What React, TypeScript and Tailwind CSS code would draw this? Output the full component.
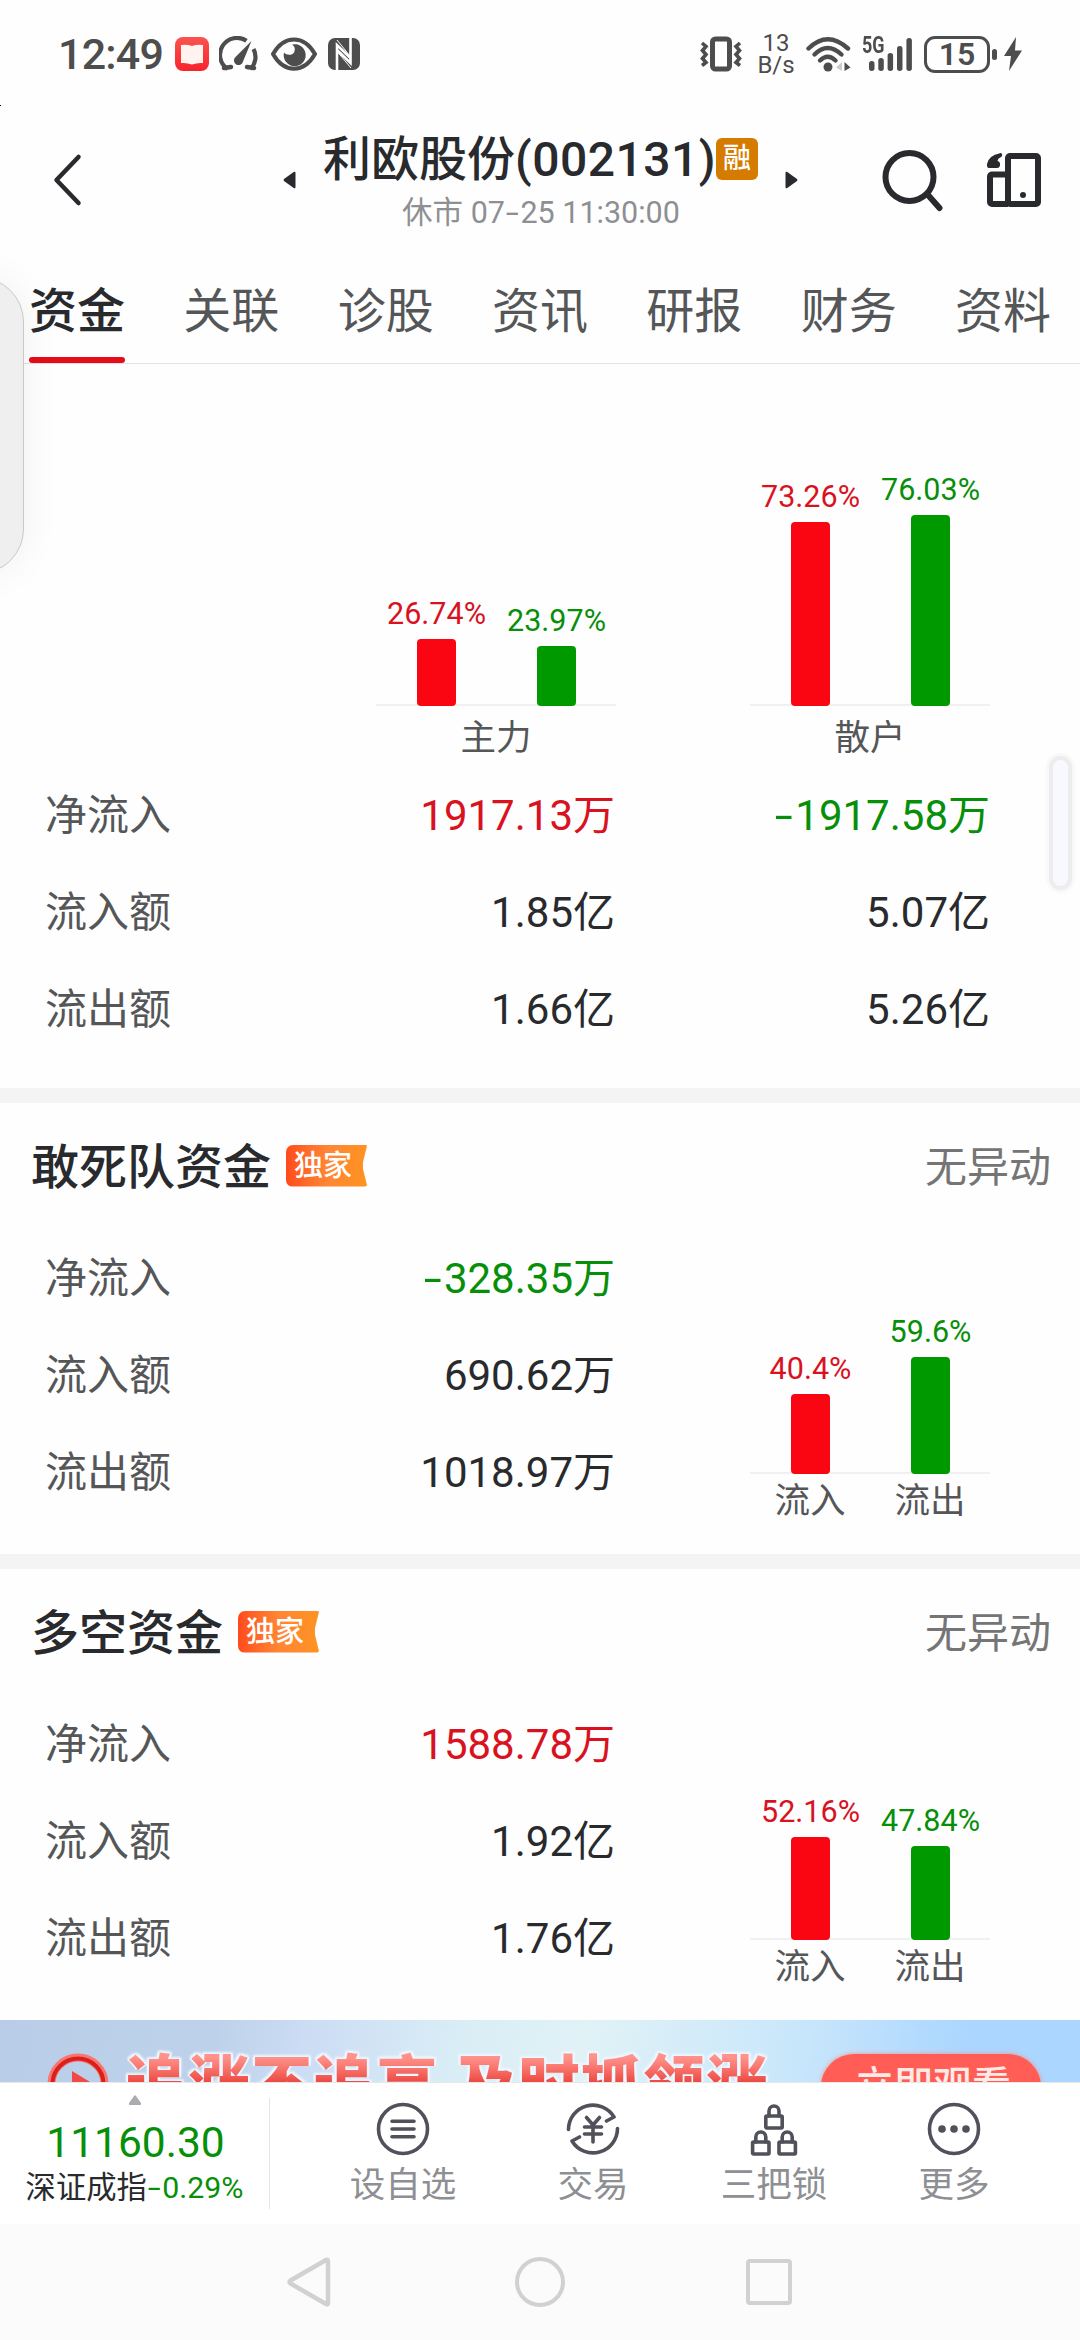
import React from "react";

type Tone = "red" | "green" | "dark";
type Bar = { value: number; tone: "red" | "green"; label?: string };

const toneText: Record<Tone, string> = {
  red: "text-[#d9121f]",
  green: "text-[#078f0a]",
  dark: "text-[#292a2d]",
};
const toneBar = { red: "bg-[#f90612]", green: "bg-[#009900]" };

/* Number text; a leading minus is drawn wider than the font's hyphen. */
function Num({ children }: { children: string }) {
  if (!children.startsWith("-")) return <>{children}</>;
  return (
    <>
      <span className="mr-[0.13em] ml-[0.1em] inline-block scale-x-[1.55]">-</span>
      {children.slice(1)}
    </>
  );
}

function StatusBar() {
  return (
    <div className="flex h-[108px] shrink-0 items-center pl-[58px] text-[#4d4d4d]">
      <span className="w-[117px] text-[43px] leading-[50px] font-medium tracking-[-0.800px]">12:49</span>
      <svg className="h-[34px] w-[34px]" viewBox="0 0 34 34">
        <defs>
          <linearGradient id="book" x1="0" y1="0" x2="0" y2="1">
            <stop offset="0" stopColor="#f9544f" />
            <stop offset="1" stopColor="#f8232c" />
          </linearGradient>
        </defs>
        <rect width="34" height="34" rx="8" fill="url(#book)" />
        <path d="M6 8q6-1 11 1q5-2 11-1v18q-6-.5-11 1.500q-5-2-11-1.500z" fill="#fff3f0" />
      </svg>
      <svg className="ml-[10px] h-[36px] w-[40px]" viewBox="0 0 40 36" fill="none" stroke="currentColor" strokeWidth="4.200" strokeLinecap="butt">
        <path d="M8.500 33A17 17 0 0 1 27.500 4.800" />
        <path d="M34.500 13A17 17 0 0 1 31.500 33" />
        <path d="M5 32l7-1M35 32l-7-1" strokeWidth="4.500" strokeLinecap="round" />
        <path d="M32.500 5L24 25.500a4.600 4.600 0 1 1-7.500-4.500z" fill="currentColor" stroke="none" />
      </svg>
      <svg className="ml-[12px] h-[34px] w-[46px]" viewBox="0 0 46 34">
        <path d="M2 17C13-2.500 33-2.500 44 17C33 36.500 13 36.500 2 17z" fill="none" stroke="currentColor" strokeWidth="4" />
        <path d="M21 7.500a11 11 0 1 1-8 8c2 2.500 8 3.500 10 0c1.800-3.500.5-6.500-2-8z" fill="currentColor" />
      </svg>
      <svg className="ml-[11px] h-[32px] w-[32px]" viewBox="0 0 32 32">
        <rect width="32" height="32" rx="7" fill="currentColor" />
        <path d="M9 32V7l13.500 13M22.500 0v25L9 12" fill="none" stroke="#fff" strokeWidth="2.600" />
        <path d="M9 2L22 18M10 14.500L23 30" fill="none" stroke="#fff" strokeWidth="1" />
      </svg>

      <svg className="ml-[340px] h-[36px] w-[42px]" viewBox="0 0 42 36" fill="none" stroke="currentColor" strokeWidth="4">
        <rect x="12.500" y="3" width="17" height="30" rx="3" strokeWidth="5" />
        <path d="M2 7l4 3.500l-3.500 4l3.500 4l-3.500 4l3.500 4l-4 3M40 7l-4 3.500l3.500 4l-3.500 4l3.500 4l-3.500 4l4 3" strokeWidth="3.600" />
      </svg>
      <div className="ml-[15px] flex w-[38px] flex-col items-center text-[24px] leading-[22px]">
        <span>13</span>
        <span>B/s</span>
      </div>
      <svg className="ml-[11px] h-[36px] w-[46px]" viewBox="0 0 46 36" fill="none" stroke="currentColor" strokeWidth="4.400" strokeLinecap="round">
        <path d="M2.500 12.500Q21.500-6 42 12.500" />
        <path d="M8.500 18.500Q21.500 5.500 35.500 18.500" />
        <path d="M14 24.500Q21.500 17 29.500 24.500" />
        <circle cx="22" cy="31" r="4.500" fill="currentColor" stroke="none" />
        <path d="M36 26v9l-6-3.500z" fill="#ccc" stroke="none" />
        <path d="M38.500 26v9l6-3.500z" fill="currentColor" stroke="none" />
      </svg>
      <div className="ml-[10px] flex h-[36px] w-[50px] items-end">
        <span className="w-[7px] origin-left scale-x-[0.78] self-start text-[23px] leading-[20px] font-bold">5G</span>
        <svg className="h-[36px] w-[43px] shrink-0" viewBox="0 0 43 36" fill="currentColor">
          <rect x="0" y="25" width="5.500" height="10" rx="2.700" />
          <rect x="9.300" y="22" width="5.500" height="13" rx="2.700" />
          <rect x="18.600" y="17" width="5.500" height="18" rx="2.700" />
          <rect x="28" y="10" width="5.500" height="25" rx="2.700" />
          <rect x="37.400" y="2" width="5.500" height="33" rx="2.700" />
        </svg>
      </div>
      <div className="ml-[12px] flex h-[37px] w-[66px] items-center justify-center rounded-[11px] border-[3px] border-current text-[32px] leading-[32px] font-semibold">
        15
      </div>
      <div className="ml-[2px] h-[11px] w-[5px] rounded-full bg-current" />
      <svg className="ml-[6px] h-[36px] w-[20px]" viewBox="0 0 20 36">
        <path d="M13 1L1 20h7L6 35L19 14.500h-7z" fill="currentColor" />
      </svg>
    </div>
  );
}

function Header() {
  return (
    <div className="flex h-[144px] shrink-0 items-center text-[#292a2d]">
      <svg className="ml-[52px] h-[54px] w-[32px]" viewBox="0 0 32 54" fill="none" stroke="currentColor" strokeWidth="4.500" strokeLinecap="round" strokeLinejoin="round">
        <path d="M26.500 4L4.500 27L26.500 50" />
      </svg>
      <svg className="ml-[199px] h-[18px] w-[13px]" viewBox="0 0 13 18" fill="currentColor">
        <path d="M12.500 2v14q0 2-1.800 1L1 10q-1-1 0-2L10.700 1q1.800-1 1.800 1z" />
      </svg>
      <div className="ml-[27px] flex h-[144px] w-[436px] flex-col pt-[22px]">
        <div className="flex h-[60px] items-center">
          <span className="w-[393px] text-[48px] leading-[60px] font-medium whitespace-nowrap">
            利欧股份<span className="tracking-[0.500px]">(002131)</span>
          </span>
          <span className="mt-[-2px] flex h-[42px] w-[42px] items-center justify-center rounded-[6px] bg-[#d47b00] text-[28px] leading-[42px] font-medium text-white">
            融
          </span>
        </div>
        <div className="mt-[3px] text-center text-[30.500px] leading-[40px] text-[#8e8f93]">
          休市 07<Num>-25</Num> 11:30:00
        </div>
      </div>
      <svg className="ml-[26px] h-[18px] w-[13px]" viewBox="0 0 13 18" fill="currentColor">
        <path d="M.5 2v14q0 2 1.800 1L12 10q1-1 0-2L2.300 1Q.5 0 .5 2z" />
      </svg>
      <svg className="ml-[83px] h-[64px] w-[64px]" viewBox="0 0 64 64" fill="none" stroke="currentColor" strokeWidth="6" strokeLinecap="round">
        <circle cx="28.500" cy="29" r="24" />
        <path d="M47 47L58.500 60" />
      </svg>
      <svg className="ml-[41px] h-[56px] w-[56px]" viewBox="0 0 56 56" fill="none" stroke="currentColor" strokeWidth="6" strokeLinejoin="round">
        <rect x="22" y="4" width="30" height="48" rx="2" />
        <path d="M22 22.500H6a2 2 0 0 0-2 2V50a2 2 0 0 0 2 2h16" />
        <circle cx="37" cy="43" r="3" fill="currentColor" stroke="none" />
        <path d="M14 1.200q2-.6 2.200 1.500q.2 2.300-2 2.800q-2.300.6-2.700 3.500q3 .5 2.500 4.500q-.5 2.500-3 2.500H3Q.6 16 1 12Q2.500 3.500 14 1.200z" fill="currentColor" stroke="none" />
      </svg>
    </div>
  );
}

function Tabs() {
  const tabs = ["资金", "关联", "诊股", "资讯", "研报", "财务", "资料"];
  return (
    <div className="flex h-[112px] shrink-0 justify-between border-b border-[#e4e4e4] px-[29px] text-[48px] text-[#555658]">
      {tabs.map((t, i) => (
        <div key={t} className="flex h-[111px] w-[96px] flex-col justify-between">
          <span className={i === 0 ? "pt-[25px] leading-[70px] font-medium text-[#292a2d]" : "pt-[25px] leading-[70px]"}>{t}</span>
          {i === 0 && <span className="h-[6px] rounded-full bg-[#e60c18]" />}
        </div>
      ))}
    </div>
  );
}

function BarChart({ bars, scale }: { bars: Bar[]; scale: number }) {
  return (
    <div className="flex w-[240px] items-end border-b-2 border-[#f0f0f0]">
      {bars.map((b) => (
        <div key={b.tone} className="-mb-[2px] flex w-[120px] flex-col items-center">
          <span className={`mb-[7px] pl-[1px] text-[30.500px] leading-[36px] ${toneText[b.tone]}`}>{b.value}%</span>
          <div className={`w-[39px] rounded-[4px] ${toneBar[b.tone]}`} style={{ height: b.value * scale }} />
        </div>
      ))}
    </div>
  );
}

function Row({ label, values }: { label: string; values: [string, Tone][] }) {
  return (
    <div className="flex h-[97px] items-center text-[42px] leading-[60px]">
      <span className="w-[195px] text-[#555658]">{label}</span>
      {values.map(([v, tone], i) => (
        <span key={i} className={`w-[375px] text-right ${toneText[tone]}`}>
          <Num>{v}</Num>
        </span>
      ))}
    </div>
  );
}

function Overview() {
  return (
    <section className="flex h-[724px] shrink-0 flex-col">
      <div className="flex h-[342px] items-end gap-[134px] pl-[376px]">
        <BarChart scale={2.52} bars={[{ value: 26.74, tone: "red" }, { value: 23.97, tone: "green" }]} />
        <BarChart scale={2.51} bars={[{ value: 73.26, tone: "red" }, { value: 76.03, tone: "green" }]} />
      </div>
      <div className="flex h-[61px] gap-[134px] pl-[376px] text-center text-[35.500px] leading-[64px] text-[#555658]">
        <span className="w-[240px]">主力</span>
        <span className="w-[240px]">散户</span>
      </div>
      <div className="pl-[45px]">
        <Row label="净流入" values={[["1917.13万", "red"], ["-1917.58万", "green"]]} />
        <Row label="流入额" values={[["1.85亿", "dark"], ["5.07亿", "dark"]]} />
        <Row label="流出额" values={[["1.66亿", "dark"], ["5.26亿", "dark"]]} />
      </div>
    </section>
  );
}

function ExclusiveBadge() {
  return (
    <div className="mt-[-2px] ml-[15px] h-[42px] w-[81px] rounded-l-[7px] bg-linear-to-r from-[#ff4a1c] via-[#ff8534] to-[#ff9320] pl-[8px] text-[29px] leading-[43px] font-medium text-white [clip-path:polygon(0_0,98%_0,100%_3%,95%_42%,95%_58%,100%_97%,98%_100%,0_100%)]">
      独家
    </div>
  );
}

function FundSection({ title, rows, bars }: { title: string; rows: [string, string, Tone][]; bars: Bar[] }) {
  return (
    <section className="flex h-[466px] shrink-0 flex-col border-t-[15px] border-[#f4f4f4]">
      <div className="flex h-[127px] items-center pr-[29px] pl-[31px]">
        <h2 className="pt-[2px] text-[48px] leading-[60px] font-medium text-[#292a2d]">{title}</h2>
        <ExclusiveBadge />
        <span className="ml-auto pt-[2px] text-[42px] leading-[60px] text-[#757575]">无异动</span>
      </div>
      <div className="flex">
        <div className="w-[615px] pl-[45px]">
          {rows.map(([label, value, tone]) => (
            <Row key={label} label={label} values={[[value, tone]]} />
          ))}
        </div>
        <div className="ml-[135px] flex w-[240px] flex-col">
          <div className="flex h-[244px] items-end">
            <BarChart scale={1.97} bars={bars} />
          </div>
          <div className="grid grid-cols-2 text-center text-[35.500px] leading-[54px] text-[#555658]">
            <span>流入</span>
            <span>流出</span>
          </div>
        </div>
      </div>
    </section>
  );
}

function Banner() {
  return (
    <div className="flex h-[62px] shrink-0 items-start overflow-hidden bg-[linear-gradient(100deg,#b9cde8_0%,#bdd2ea_20%,#cbdcf4_28%,#d9edf6_42%,#e0f2f6_54%,#c8e6fb_74%,#abd6ff_89%)] pl-[47px]">
      <svg className="mt-[33px] h-[62px] w-[62px] shrink-0" viewBox="0 0 62 62">
        <circle cx="31" cy="31" r="26.500" fill="none" stroke="#f7766f" strokeWidth="8" />
        <circle cx="31" cy="31" r="25.500" fill="none" stroke="#d9201d" strokeWidth="4" />
        <path d="M25 18l18 11l-18 11z" fill="#ef4a44" />
      </svg>
      <div className="mt-[25px] ml-[17px] w-[695px] shrink-0 [filter:drop-shadow(2px_0_0_#f0f6ff)_drop-shadow(-2px_0_0_#f0f6ff)_drop-shadow(0_-2px_1px_#f0f6ff)]">
        <span className="block bg-linear-to-b from-[#ff938c] from-15% to-[#e52a2a] to-55% bg-clip-text text-[61px] leading-[80px] font-black tracking-[1.600px] whitespace-nowrap text-transparent">
          追涨不追高 及时抓领涨
        </span>
      </div>
      <div className="mt-[34px] h-[66px] w-[220px] shrink-0 rounded-full bg-[#ff5d55] pl-[4px] text-center text-[39px] leading-[64px] font-medium text-[#ffeae5] shadow-[0_0_4px_#ff8a80]">
        立即观看
      </div>
    </div>
  );
}

function Lock({ x, y }: { x: number; y: number }) {
  return (
    <g transform={`translate(${x} ${y})`}>
      <rect x="1.800" y="12" width="16.400" height="12" rx="1" />
      <path d="M5 12V7a5 5 0 0 1 10 0v5" />
    </g>
  );
}

const iconProps = {
  className: "h-[54px] w-[54px]",
  viewBox: "0 0 54 54",
  fill: "none",
  stroke: "#50515a",
  strokeWidth: 3.6,
  strokeLinecap: "round" as const,
  strokeLinejoin: "round" as const,
};

function BottomBar() {
  return (
    <div className="flex h-[142px] shrink-0 border-t border-[#e8e8e8] bg-white">
      <div className="flex w-[269px] flex-col items-center">
        <svg className="mt-[12px] h-[10px] w-[12px]" viewBox="0 0 12 10" fill="#aaacaf">
          <path d="M5 1q1-1.500 2 0l5 7q.5 2-1 2H1q-1.500 0-1-2z" />
        </svg>
        <span className="mt-[13px] pl-[2px] text-[42.500px] leading-[50px] text-[#078f0a]">11160.30</span>
        <span className="mt-[2px] text-[30.300px] leading-[36px] whitespace-nowrap text-[#292a2d]">
          深证成指<span className="text-[#078f0a]"><Num>-0.29%</Num></span>
        </span>
      </div>
      <div className="mt-[15px] h-[111px] w-px bg-[#e4e4e4]" />
      <div className="flex pt-[19px] pl-[79px] text-[35.500px] leading-[58px] text-[#8e8f93]">
        <div className="flex w-[108px] flex-col items-center">
          <svg {...iconProps}>
            <circle cx="27" cy="27" r="24.500" />
            <path d="M16 19.200h22M16 27h22M16 34.800h22" />
          </svg>
          <span>设自选</span>
        </div>
        <div className="ml-[100px] flex w-[72px] flex-col items-center">
          <svg {...iconProps}>
            <path d="M2.500 27.500A24.500 24.500 0 0 1 48 15L40.500 19" />
            <path d="M51.500 26.500A24.500 24.500 0 0 1 6 39L13.500 35" />
            <path d="M20.500 15.500L27 23l6.500-7.500M18.500 25h17M18.500 32h17M27 23v17" />
          </svg>
          <span>交易</span>
        </div>
        <div className="ml-[91px] flex w-[108px] flex-col items-center">
          <svg {...iconProps}>
            <Lock x={17} y={2} />
            <Lock x={3.800} y={28} />
            <Lock x={30.200} y={28} />
          </svg>
          <span>三把锁</span>
        </div>
        <div className="ml-[90px] flex w-[72px] flex-col items-center">
          <svg {...iconProps}>
            <circle cx="27" cy="27" r="24.500" />
            <g fill="#50515a" stroke="none">
              <circle cx="15" cy="27" r="3.800" />
              <circle cx="27" cy="27" r="3.800" />
              <circle cx="39" cy="27" r="3.800" />
            </g>
          </svg>
          <span>更多</span>
        </div>
      </div>
    </div>
  );
}

function SystemNav() {
  return (
    <div className="flex h-[116px] shrink-0 items-center bg-[#fbfbfb] pl-[286px]">
      <svg className="h-[52px] w-[46px]" viewBox="0 0 46 52" fill="none" stroke="#d1d1d1" strokeWidth="4.500" strokeLinejoin="round">
        <path d="M40 4q2-1 2 1.500v41q0 2.500-2 1.500L4.500 27.500q-2-1.500 0-3z" />
      </svg>
      <div className="ml-[183px] h-[50px] w-[50px] rounded-full border-[4.500px] border-[#d1d1d1]" />
      <div className="ml-[181px] h-[46px] w-[46px] rounded-[4px] border-[4px] border-[#d1d1d1]" />
    </div>
  );
}

export default function App() {
  return (
    <div className="relative flex h-[2340px] w-[1080px] flex-col overflow-hidden bg-[#fefefe] font-['Roboto','Noto_Sans_CJK_SC',sans-serif]">
      <StatusBar />
      <Header />
      <Tabs />
      <Overview />
      <FundSection
        title="敢死队资金"
        rows={[["净流入", "-328.35万", "green"], ["流入额", "690.62万", "dark"], ["流出额", "1018.97万", "dark"]]}
        bars={[{ value: 40.4, tone: "red" }, { value: 59.6, tone: "green" }]}
      />
      <FundSection
        title="多空资金"
        rows={[["净流入", "1588.78万", "red"], ["流入额", "1.92亿", "dark"], ["流出额", "1.76亿", "dark"]]}
        bars={[{ value: 52.16, tone: "red" }, { value: 47.84, tone: "green" }]}
      />
      <Banner />
      <BottomBar />
      <SystemNav />
      <div className="absolute top-[277px] left-[-70px] h-[297px] w-[94px] rounded-[45px] border border-[#c9c9c9] bg-[#efefef] shadow-[0_0_40px_rgba(0,0,0,0.06)]" />
      <div className="absolute top-[756px] left-[1049px] h-[134px] w-[23px] rounded-full border-4 border-[#ededee] bg-[#f8f9fe] shadow-[0_0_2px_3px_#f8f8f8]" />
      <div className="absolute top-[105px] left-0 h-px w-px bg-black" />
    </div>
  );
}
